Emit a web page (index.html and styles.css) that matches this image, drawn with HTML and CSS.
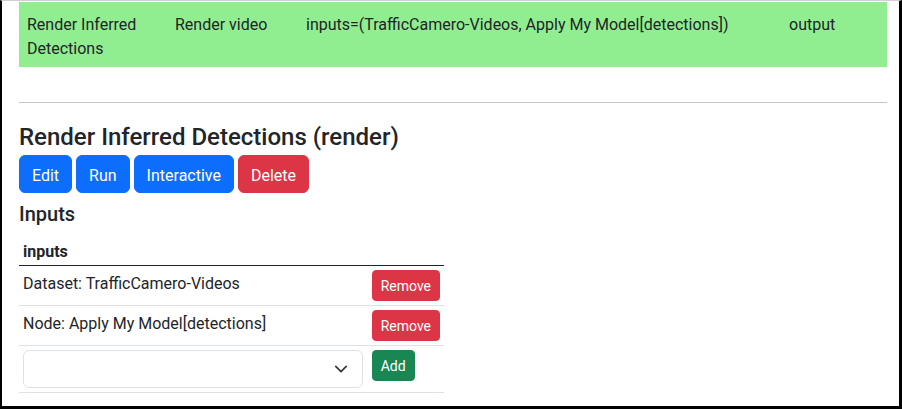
FILE: index.html
```html
<!DOCTYPE html>
<html>
<head>
<meta charset="utf-8">
<link rel="stylesheet" href="styles.css">
</head>
<body>
<div class="frame">
  <div class="summary">
    <div class="cell">Render Inferred Detections</div>
    <div class="cell">Render video</div>
    <div class="cell">inputs=(TrafficCamero-Videos, Apply My Model[detections])</div>
    <div class="cell">output</div>
  </div>
  <hr class="divider">
  <h3 class="title">Render Inferred Detections (render)</h3>
  <div class="actions">
    <button class="btn btn-primary">Edit</button>
    <button class="btn btn-primary">Run</button>
    <button class="btn btn-primary">Interactive</button>
    <button class="btn btn-danger">Delete</button>
  </div>
  <h5 class="subtitle">Inputs</h5>
  <table class="inputs">
    <thead>
      <tr><th class="col-main">inputs</th><th class="col-act"></th></tr>
    </thead>
    <tbody>
      <tr>
        <td class="txt">Dataset: TrafficCamero-Videos</td>
        <td><button class="btn btn-sm btn-danger">Remove</button></td>
      </tr>
      <tr>
        <td class="txt">Node: Apply My Model[detections]</td>
        <td><button class="btn btn-sm btn-danger">Remove</button></td>
      </tr>
      <tr>
        <td>
          <div class="select">
            <svg class="chev" width="14" height="14" viewBox="0 0 16 16"><path d="m2 5 6 6 6-6" fill="none" stroke="#343a40" stroke-width="2" stroke-linecap="round" stroke-linejoin="round"/></svg>
          </div>
        </td>
        <td><button class="btn btn-sm btn-success">Add</button></td>
      </tr>
    </tbody>
  </table>
</div>
</body>
</html>
```
FILE: styles.css
```css
html, body {
  margin: 0;
  padding: 0;
  background: #fff;
}
body {
  font-family: Roboto, "Liberation Sans", sans-serif;
  font-size: 16px;
  line-height: 24px;
  color: #212529;
}
.frame {
  box-sizing: border-box;
  width: 902px;
  height: 409px;
  overflow: hidden;
  border-left: 2px solid #000;
  border-right: 3px solid #000;
  border-bottom: 3px solid #000;
  border-top: 1px solid #d0d0d0;
  padding: 0 12px 0 17px;
}
.summary {
  margin-top: 1px;
  background: #90ee90;
  display: grid;
  grid-template-columns: 148px 131px 483px 106px;
  padding: 11px 0 6px;
}
.summary .cell {
  padding: 0 8px;
}
.divider {
  margin: 35px 0 0;
  border: 0;
  border-top: 1px solid #c6c6c6;
  height: 0;
}
.title {
  margin: 20px 0 3px;
  font-size: 24px;
  font-weight: 500;
  line-height: 29px;
}
.actions {
  display: flex;
  gap: 4px;
}
.btn {
  font-family: inherit;
  font-size: 16px;
  line-height: 24px;
  padding: 8px 12px 4px;
  border: 1px solid transparent;
  border-radius: 6px;
  color: #fff;
  cursor: pointer;
}
.btn-primary { background: #0d6efd; border-color: #0d6efd; }
.btn-danger { background: #dc3545; border-color: #dc3545; }
.btn-success { background: #198754; border-color: #198754; }
.btn-sm {
  font-size: 14px;
  line-height: 21px;
  padding: 5px 8px 3px;
  border-radius: 4px;
  display: block;
}
.subtitle {
  margin: 9px 0 7px;
  font-size: 20px;
  font-weight: 500;
  line-height: 24px;
}
.inputs {
  border-collapse: collapse;
  width: 425px;
}
.inputs th, .inputs td {
  padding: 4px;
  text-align: left;
  vertical-align: top;
  border-bottom: 1px solid #dee2e6;
}
.inputs td.txt {
  padding-top: 6px;
  padding-bottom: 2px;
}
.inputs thead th {
  font-weight: 700;
  padding-top: 7px;
  padding-bottom: 1px;
  border-bottom: 1px solid #212529;
}
.col-main { width: 341px; }
.col-act { width: 68px; }
.select {
  box-sizing: border-box;
  width: 340px;
  height: 38px;
  border: 1px solid #dee2e6;
  border-radius: 6px;
  background: #fff;
  display: flex;
  align-items: center;
  justify-content: flex-end;
  padding-right: 14px;
}
.chev {
  display: block;
}
```
